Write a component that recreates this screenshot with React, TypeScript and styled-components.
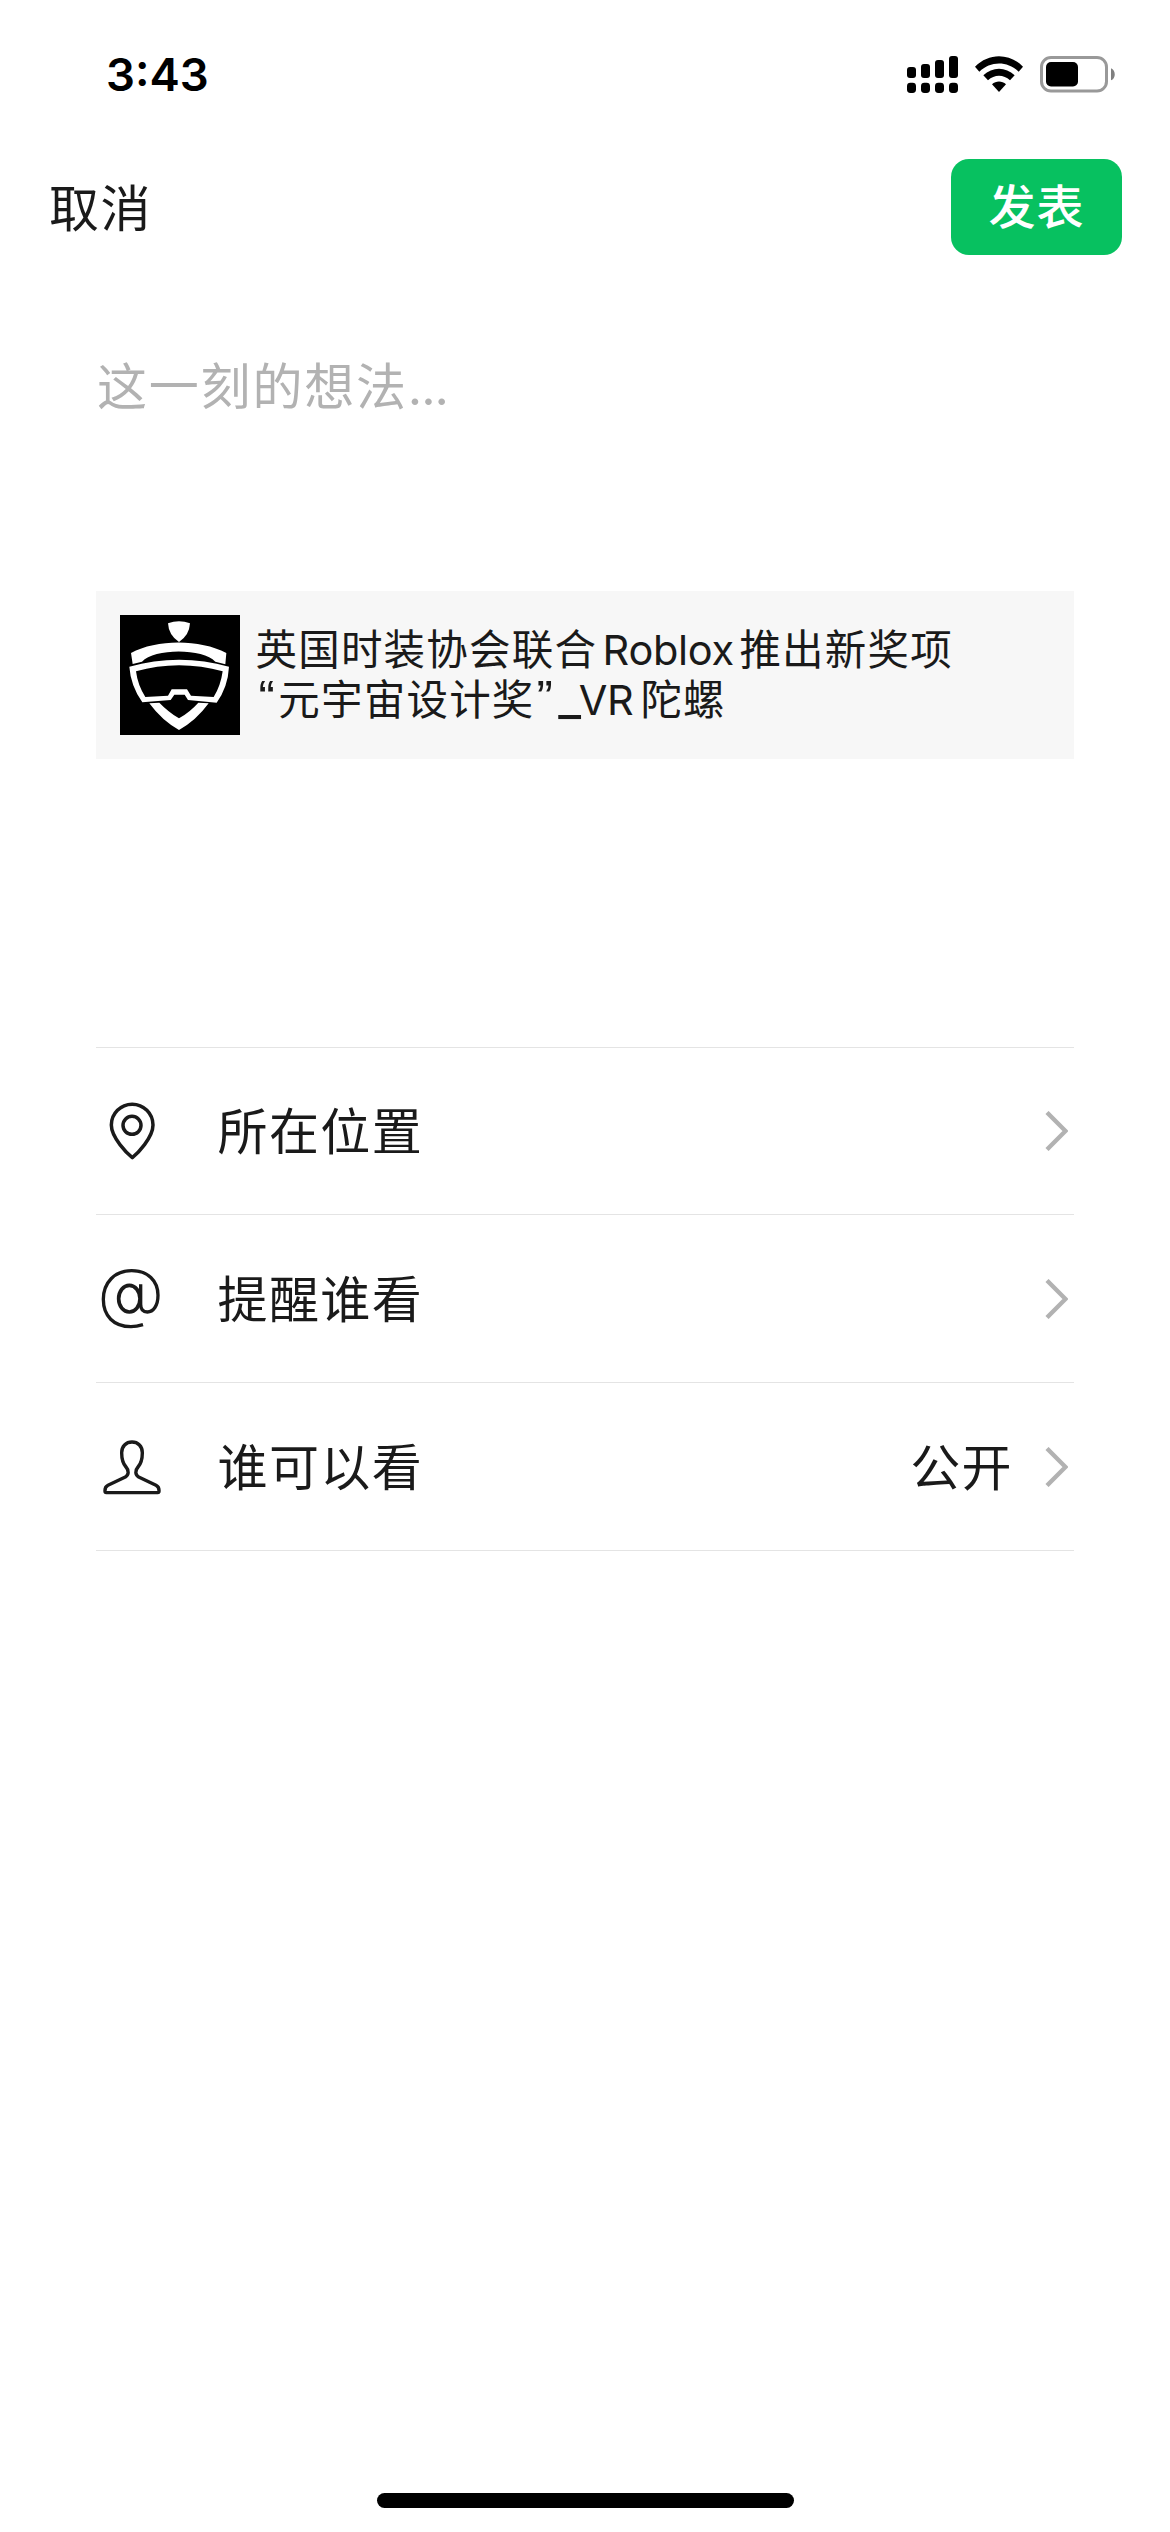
import React from "react";
import styled, { createGlobalStyle } from "styled-components";

const INK = "#1a1a1a";

const GlobalStyle = createGlobalStyle`
  * { box-sizing: border-box; }
  body {
    margin: 0;
    background: #fff;
    color: ${INK};
    font-family: Inter, "Noto Sans CJK SC", sans-serif;
  }
  button {
    margin: 0;
    padding: 0;
    border: 0;
    background: none;
    color: inherit;
    font: inherit;
    letter-spacing: inherit;
  }
`;

const Screen = styled.main`
  display: flex;
  flex-direction: column;
  width: 1170px;
  height: 2532px;
  background: #fff;
  overflow: hidden;
`;

const StatusBar = styled.header`
  display: flex;
  align-items: center;
  justify-content: space-between;
  height: 148px;
  padding: 1px 54px 0 106px;
`;

const Clock = styled.time`
  color: #000;
  font-size: 45.5px;
  font-weight: 600;
  line-height: 56px;
`;

const StatusIcons = styled.div`
  display: flex;
  align-items: center;
  gap: 17px;
`;

const NavBar = styled.nav`
  display: flex;
  align-items: center;
  justify-content: space-between;
  height: 118px;
  padding: 0 48px 0 49px;
`;

const CancelButton = styled.button`
  padding-top: 3px;
  font-size: 50px;
  letter-spacing: 1.5px;
  line-height: 72px;
`;

const PublishButton = styled.button`
  width: 171px;
  height: 96px;
  border-radius: 18px;
  background: #07c160;
  color: #fff;
  font-size: 47px;
  font-weight: 500;
  letter-spacing: 1px;
  line-height: 94px;
  text-align: center;
`;

const Composer = styled.section`
  display: flex;
  flex-direction: column;
  padding: 0 96px;
`;

const Prompt = styled.p`
  height: 325px;
  margin: 0;
  padding: 85px 0 0 1px;
  color: #b2b2b2;
  font-size: 50px;
  letter-spacing: 1.8px;
  line-height: 72px;
`;

const Ellipsis = styled.span`
  letter-spacing: -1px;
`;

const LinkCard = styled.article`
  display: flex;
  align-items: center;
  gap: 15.5px;
  height: 168px;
  padding: 24px;
  background: #f7f7f7;
`;

const LinkTitle = styled.h1`
  margin: 0;
  font-size: 41.5px;
  font-weight: 400;
  letter-spacing: 1.2px;
  line-height: 50px;
  white-space: nowrap;
`;

const Latin = styled.span<{ $before?: number; $after?: number }>`
  margin-left: ${(p) => p.$before ?? 0}px;
  margin-right: ${(p) => p.$after ?? 0}px;
  font-size: 41.5px;
  letter-spacing: -0.3px;
`;

const Quote = styled.span<{ $before: number; $after: number }>`
  margin-left: ${(p) => p.$before}px;
  margin-right: ${(p) => p.$after}px;
  font-family: "Liberation Sans", sans-serif;
  font-size: 49px;
  letter-spacing: 0;
  line-height: 0;
  vertical-align: 1px;
`;

const Underscore = styled.span`
  margin-right: -2.5px;
  font-size: 50px;
  letter-spacing: 0;
  line-height: 0;
`;

const Options = styled.ul`
  margin: 288px 0 0;
  padding: 0;
  list-style: none;
  border-top: 1px solid #e4e4e4;
`;

const OptionRow = styled.li<{ $height: number }>`
  display: flex;
  align-items: center;
  height: ${(p) => p.$height}px;
  border-bottom: 1px solid #e4e4e4;
`;

const OptionIcon = styled.svg`
  flex: none;
  width: 72px;
  height: 72px;
  fill: none;
  stroke: ${INK};
`;

const OptionLabel = styled.span`
  flex: 1;
  margin-left: 49.5px;
  padding-top: 2px;
  font-size: 50px;
  letter-spacing: 1.4px;
  line-height: 72px;
`;

const OptionValue = styled.span`
  margin-right: 31px;
  padding-top: 2px;
  font-size: 50px;
  letter-spacing: 1.4px;
  line-height: 72px;
`;

const Chevron = styled.svg`
  flex: none;
  width: 24px;
  height: 40px;
  margin-right: 6px;
  fill: none;
  stroke: #b2b2b2;
  stroke-width: 4.4;
`;

const HomeArea = styled.footer`
  display: flex;
  justify-content: center;
  margin-top: auto;
  padding-bottom: 24px;
`;

const HomeIndicator = styled.div`
  width: 417px;
  height: 15px;
  border-radius: 8px;
  background: #000;
`;

const bars = [
  { x: 0, top: 11 },
  { x: 14, top: 8 },
  { x: 28, top: 4 },
  { x: 42, top: 0 },
];

function SignalIcon() {
  return (
    <svg width="51" height="37" viewBox="0 0 51 37">
      {bars.map((b) => (
        <g key={b.x}>
          <rect x={b.x} y={b.top} width="9" height={22 - b.top} rx="3" />
          <rect x={b.x} y="26.7" width="9" height="10.3" rx="3.4" />
        </g>
      ))}
    </svg>
  );
}

function WifiIcon() {
  return (
    <svg width="48" height="37" viewBox="285 75 144 111">
      <path d="M285 107C326 65 388 65 429 107L416 122C383 89 331 89 298 122Z" />
      <path d="M310 133C337 107 377 107 404 133L390 148C371 130 343 130 324 148Z" />
      <path d="M336 160C348 149 366 149 378 160L357 183Z" />
    </svg>
  );
}

function BatteryIcon() {
  return (
    <svg width="76" height="37" viewBox="0 0 76 37">
      <rect x="1.5" y="1.5" width="65" height="33.5" rx="9.5" fill="none" stroke="#999" strokeWidth="3" />
      <rect x="6" y="6" width="32" height="24.5" rx="5" />
      <path d="M71 12.2C76 14 76 22.5 71 24.3Z" fill="#808080" />
    </svg>
  );
}

function Thumbnail() {
  return (
    <svg width="120" height="120" viewBox="120 105 360 360" fill="#fff">
      <rect x="120" y="105" width="360" height="360" fill="#000" />
      <path d="M264 130Q297 118 330 130Q328 166 297 186Q266 166 264 130Z" />
      <path d="M153 219C230 177 360 177 439 219L436 253L406 245C370 204 222 204 186 245L158 252Z" />
      <path
        fillRule="evenodd"
        d="M148 260C245 232 350 232 447 260Q444 320 410 368L324 360L314 344H283L272 360L187 367Q152 317 148 260ZM168 274Q173 315 196 351L264 347L275 328H321L333 347L401 351Q422 318 428 274C345 250 252 249 168 274Z"
      />
      <path d="M208 370L238 368Q265 396 297 415Q330 396 355 368L386 370Q348 422 297 450Q246 422 208 370Z" />
    </svg>
  );
}

function PinIcon() {
  return (
    <OptionIcon viewBox="48 194 216 216" strokeWidth="10.5">
      <path d="M157 382C142 370 94 322 94 284A62 62 0 0 1 219 284C219 322 172 370 157 382Z" strokeLinejoin="round" />
      <circle cx="156" cy="285" r="27" />
    </OptionIcon>
  );
}

function MentionIcon() {
  return (
    <OptionIcon viewBox="48 128 216 216" strokeWidth="10">
      <path d="M189 313C176 317 165 319 153 319C101 319 70 287 70 237C70 187 104 151 155 151C203 151 234 181 234 225C234 256 220 275 202 275C189 275 182 267 182 252V192" />
      <ellipse cx="148" cy="235" rx="32" ry="40" strokeWidth="11" />
    </OptionIcon>
  );
}

function PersonIcon() {
  return (
    <OptionIcon viewBox="48 122 216 216" strokeWidth="10.2" strokeLinejoin="round">
      <path d="M156 155C138 155 125 168 125 187C125 207 130 221 138 230C148 241 146 254 136 260L84 285C76 289 75 293 75 300V303Q75 307 79 307H233Q237 307 237 303V300C237 293 236 289 228 285L176 260C166 254 164 241 174 230C182 221 187 207 187 187C187 168 174 155 156 155Z" />
    </OptionIcon>
  );
}

const options = [
  { label: "所在位置", Icon: PinIcon, height: 167 },
  { label: "提醒谁看", Icon: MentionIcon, height: 168 },
  { label: "谁可以看", Icon: PersonIcon, height: 168, value: "公开" },
];

export default function App() {
  return (
    <Screen lang="zh-CN">
      <GlobalStyle />
      <StatusBar>
        <Clock>3:43</Clock>
        <StatusIcons>
          <SignalIcon />
          <WifiIcon />
          <BatteryIcon />
        </StatusIcons>
      </StatusBar>
      <NavBar>
        <CancelButton>取消</CancelButton>
        <PublishButton>发表</PublishButton>
      </NavBar>
      <Composer>
        <Prompt>
          这一刻的想法<Ellipsis>...</Ellipsis>
        </Prompt>
        <LinkCard>
          <Thumbnail />
          <LinkTitle>
            英国时装协会联合
            <Latin $before={5.5} $after={5.5}>Roblox</Latin>
            推出新奖项
            <br />
            <Quote $before={3} $after={3.5}>“</Quote>
            元宇宙设计奖
            <Quote $before={2} $after={5.5}>”</Quote>
            <Underscore>_</Underscore>
            <Latin $after={7}>VR</Latin>
            陀螺
          </LinkTitle>
        </LinkCard>
        <Options>
          {options.map(({ label, Icon, height, value }) => (
            <OptionRow key={label} $height={height}>
              <Icon />
              <OptionLabel>{label}</OptionLabel>
              {value && <OptionValue>{value}</OptionValue>}
              <Chevron viewBox="0 0 24 40">
                <path d="M3 1.5L21.5 20L3 38.5" />
              </Chevron>
            </OptionRow>
          ))}
        </Options>
      </Composer>
      <HomeArea>
        <HomeIndicator />
      </HomeArea>
    </Screen>
  );
}
